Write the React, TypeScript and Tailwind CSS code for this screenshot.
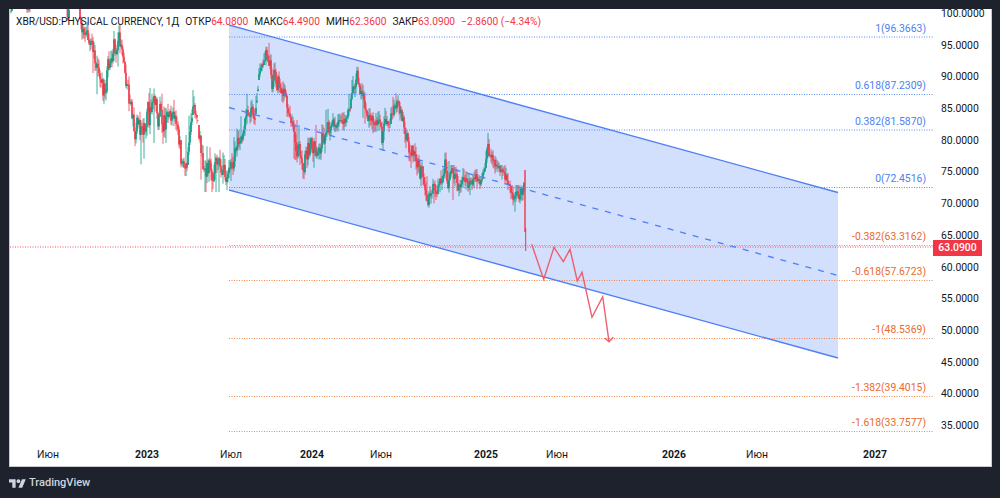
const FONT = "font-['Roboto',sans-serif]"

// [x, high y, low y] outline of the price history, in page pixels
const ENVELOPE: [number, number, number][] = [
  [11, 8, 26], [13, -12, -4], [24, -12, -4], [26, 6, 13], [30, 6, 12], [32, -12, -4], [66, -12, -4], [68, 8, 38],
  [70, -12, -2], [77, -12, 0], [80, 6, 38], [85, 8, 55], [90, 25, 52], [95, 45, 87],
  [103, 75, 116], [110, 30, 80], [122, 8, 60], [128, 75, 120], [135, 85, 165], [139, 115, 168], [146, 90, 155],
  [156, 85, 140], [165, 98, 145], [175, 100, 125], [181, 140, 192], [186, 135, 185], [193, 90, 115], [197, 115, 155],
  [203, 145, 192], [212, 148, 192], [222, 150, 192], [228, 165, 190], [233, 140, 175], [240, 120, 150], [248, 90, 127],
  [255, 105, 125], [259, 68, 80], [265, 40, 62], [268, 37, 72], [272, 60, 112], [278, 50, 100], [283, 75, 105],
  [288, 100, 150], [295, 115, 160], [303, 135, 187], [308, 125, 172], [318, 125, 165], [327, 108, 150], [335, 115, 132],
  [345, 112, 130], [352, 80, 105], [357, 60, 100], [363, 85, 118], [369, 108, 135], [376, 110, 132], [382, 112, 160],
  [392, 98, 120], [397, 92, 112], [403, 112, 140], [409, 130, 170], [414, 132, 165], [419, 150, 190], [424, 170, 200],
  [429, 180, 212], [436, 165, 200], [442, 133, 190], [450, 165, 200], [460, 165, 200], [470, 175, 195], [480, 165, 190],
  [484, 145, 175], [487, 130, 165], [492, 145, 172], [500, 165, 180], [508, 165, 190], [514, 185, 213], [520, 185, 205],
  [524, 170, 200],
]

function envelopeAt(x: number) {
  for (let i = 0; i < ENVELOPE.length - 1; i++) {
    const a = ENVELOPE[i]
    const b = ENVELOPE[i + 1]
    if (x <= b[0]) {
      const t = (x - a[0]) / (b[0] - a[0])
      return [a[1] + (b[1] - a[1]) * t, a[2] + (b[2] - a[2]) * t]
    }
  }
  return [170, 200]
}

function buildCandles() {
  let seed = 90125
  const rand = () => {
    seed = (seed * 1664525 + 1013904223) % 4294967296
    return seed / 4294967296
  }
  const out: { x: number; open: number; close: number; top: number; bottom: number; up: boolean }[] = []
  let close = 12
  for (let x = 11; x <= 524.5; x += 1) {
    const [hi, lo] = envelopeAt(x)
    const open = Math.min(lo, Math.max(hi, close))
    const target = hi + rand() * (lo - hi)
    const next = open * 0.5 + target * 0.5
    close = next
    let top = Math.max(hi, Math.min(open, next) - rand() * 9)
    let bottom = Math.min(lo, Math.max(open, next) + rand() * 9)
    if (rand() < 0.12) top = hi
    if (rand() < 0.12) bottom = lo
    out.push({ x, open: Math.min(open, next), close: Math.max(open, next), top, bottom, up: next < open })
  }
  return out
}

const candles = buildCandles()

const BLUE_FIBS = [
  { y: 37, label: "1(96.3663)", ty: 28 },
  { y: 94.5, label: "0.618(87.2309)", ty: 85 },
  { y: 130, label: "0.382(81.5870)", ty: 121 },
  { y: 187.5, label: "0(72.4516)", ty: 178 },
]
const ORANGE_FIBS = [
  { y: 245.5, label: "-0.382(63.3162)", ty: 236 },
  { y: 280.5, label: "-0.618(57.6723)", ty: 271 },
  { y: 338.5, label: "-1(48.5369)", ty: 329 },
  { y: 396.5, label: "-1.382(39.4015)", ty: 387 },
  { y: 431.5, label: "-1.618(33.7577)", ty: 422 },
]
const PRICES = ["100.0000", "95.0000", "90.0000", "85.0000", "80.0000", "75.0000", "70.0000", "65.0000", "60.0000", "55.0000", "50.0000", "45.0000", "40.0000", "35.0000"]

function Chart() {
  return (
    <svg width={923} height={431} viewBox="10 9 923 431" className="shrink-0">
      <polygon points="229,25 838,192.5 838,358 229,190" fill="#d2dffd" />
      {candles.map((c, i) => (
        <g key={i} stroke={c.up ? "#089981" : "#f23645"}>
          <line x1={c.x} x2={c.x} y1={c.top} y2={c.bottom} strokeWidth={0.9} opacity={0.85} />
          <line x1={c.x} x2={c.x} y1={c.open} y2={c.close} strokeWidth={1.5} />
        </g>
      ))}
      <line x1={525} x2={525} y1={170} y2={232} stroke="#f23645" strokeWidth={1.4} />
      <line x1={525.7} x2={525.7} y1={228} y2={251} stroke="#f23645" strokeWidth={1} />

      {BLUE_FIBS.map((f) => (
        <line key={f.y} x1={229} x2={933} y1={f.y} y2={f.y} stroke="#5b8cf5" strokeDasharray="1 1.5" />
      ))}
      {ORANGE_FIBS.map((f) => (
        <line key={f.y} x1={229} x2={933} y1={f.y} y2={f.y} stroke="#f5854a" strokeDasharray="1 1.5" />
      ))}
      <line x1={10} x2={933} y1={247} y2={247} stroke="#ee4d5c" strokeDasharray="1 1.5" />

      <line x1={229} y1={25} x2={838} y2={192.5} stroke="#4f7ff5" strokeWidth={1.3} />
      <line x1={229} y1={190} x2={838} y2={358} stroke="#4f7ff5" strokeWidth={1.3} />
      <line x1={229} y1={107.5} x2={838} y2={275.5} stroke="#4f7ff5" strokeWidth={1.3} strokeDasharray="6 7" />

      <polyline
        points="531.7,244.3 543.7,279.3 554,247.3 563.3,261.7 570,249.3 577.3,281 582,272.3 592,317.3 602.7,296.7 609,341.7"
        fill="none"
        stroke="#ef5f70"
        strokeWidth={1.4}
      />
      <polyline points="605,338.3 609,341.7 613.3,337.3" fill="none" stroke="#ef5f70" strokeWidth={1.4} />

      {BLUE_FIBS.map((f) => (
        <text key={f.label} x={926} y={f.ty + 4} textAnchor="end" fontSize={10.4} fontFamily="Roboto, sans-serif" fill="#4e80f0">
          {f.label}
        </text>
      ))}
      {ORANGE_FIBS.map((f) => (
        <text key={f.label} x={926} y={f.ty + 4} textAnchor="end" fontSize={10.4} fontFamily="Roboto, sans-serif" fill="#ea6a2e">
          {f.label}
        </text>
      ))}
    </svg>
  )
}

function Legend() {
  const red = "text-[#f23645]"
  return (
    <div className="absolute left-[6px] top-[6px] flex h-[14px] items-center whitespace-nowrap text-[10.2px] leading-[14px] text-[#131722]">
      <span>XBR/USD:PHYSICAL CURRENCY, 1Д</span>
      <span className="ml-[6px]">ОТКР</span>
      <span className={red}>64.0800</span>
      <span className="ml-[6px]">МАКС</span>
      <span className={red}>64.4900</span>
      <span className="ml-[6px]">МИН</span>
      <span className={red}>62.3600</span>
      <span className="ml-[6px]">ЗАКР</span>
      <span className={red}>63.0900</span>
      <span className={`ml-[6px] ${red}`}>−2.8600 (−4.34%)</span>
    </div>
  )
}

export default function App() {
  return (
    <div className={`flex h-[498px] w-[1000px] flex-col bg-[#1e222d] ${FONT}`}>
      <div className="relative ml-[9px] mt-[9px] flex h-[458px] w-[983px] flex-col border border-t-0 border-[#c9cbd0] bg-white">
        <div className="flex h-[431px] shrink-0">
          <Chart />
          <div className="flex h-[422px] flex-col justify-between pl-[8px] text-[10.4px] leading-[10px] text-[#131722]">
            {PRICES.map((p) => (
              <span key={p}>{p}</span>
            ))}
          </div>
        </div>
        <div className="absolute left-[923px] top-[231px] flex h-[16px] w-[49px] items-center justify-center bg-[#f23645] text-[10.4px] font-medium text-white">
          63.0900
        </div>
        <Legend />
        <div className="flex items-center pl-[18px] pt-[8px] text-[10.4px] leading-[14px] text-[#131722]">
          <span className="w-10 text-center">Июн</span>
          <span className="ml-[59px] w-10 text-center font-bold">2023</span>
          <span className="ml-[44px] w-10 text-center">Июл</span>
          <span className="ml-[41px] w-10 text-center font-bold">2024</span>
          <span className="ml-[29px] w-10 text-center">Июн</span>
          <span className="ml-[65px] w-10 text-center font-bold">2025</span>
          <span className="ml-[31px] w-10 text-center">Июн</span>
          <span className="ml-[77px] w-10 text-center font-bold">2026</span>
          <span className="ml-[43px] w-10 text-center">Июн</span>
          <span className="ml-[78px] w-10 text-center font-bold">2027</span>
        </div>
      </div>
      <div className="ml-[9px] mt-[9px] flex items-center gap-[3px] text-[#d1d4dc]">
        <svg width={17} height={9} viewBox="0 4 36 18" fill="currentColor">
          <path d="M14 22H7V11H0V4h14v18zM28 22h-8l7.5-18h8L28 22z" />
          <circle cx={20} cy={8} r={4} />
        </svg>
        <span className="text-[11px] font-medium leading-[14px]">TradingView</span>
      </div>
    </div>
  )
}
